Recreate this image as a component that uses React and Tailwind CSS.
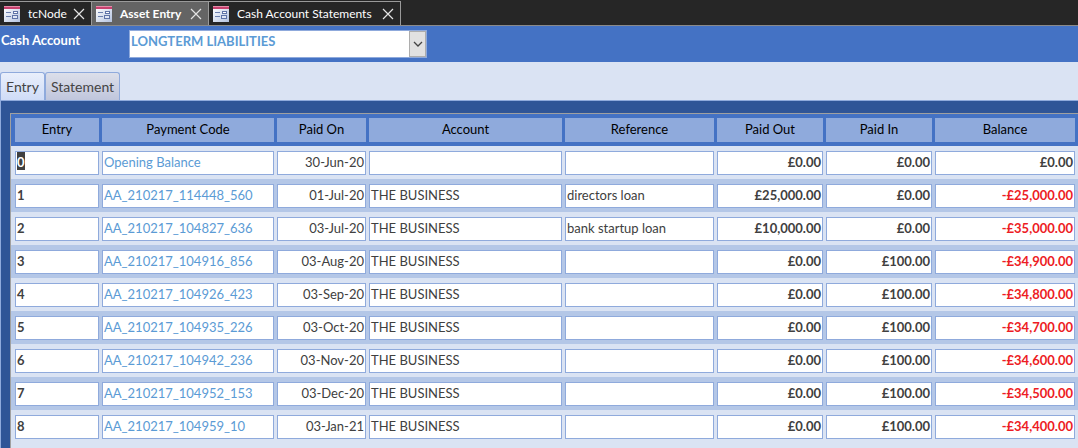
import { useState } from "react";

const documents = [
  { title: "tcNode", width: "w-[92px]" },
  { title: "Asset Entry", width: "w-[117px]", active: true },
  { title: "Cash Account Statements", width: "w-[192px]" },
];

const columns = [
  { title: "Entry", width: "w-[88px]", cell: "font-bold" },
  { title: "Payment Code", width: "w-[175px]", cell: "text-[#5b9bd5]" },
  { title: "Paid On", width: "w-[92px]", cell: "text-right" },
  { title: "Account", width: "w-[196px]", cell: "" },
  { title: "Reference", width: "w-[152px]", cell: "" },
  { title: "Paid Out", width: "w-[109px]", cell: "text-right font-bold" },
  { title: "Paid In", width: "w-[109px]", cell: "text-right font-bold" },
  { title: "Balance", width: "w-[146px]", cell: "text-right font-bold" },
];

const rows = [
  ["0", "Opening Balance", "30-Jun-20", "", "", "£0.00", "£0.00", "£0.00"],
  ["1", "AA_210217_114448_560", "01-Jul-20", "THE BUSINESS", "directors loan", "£25,000.00", "£0.00", "-£25,000.00"],
  ["2", "AA_210217_104827_636", "03-Jul-20", "THE BUSINESS", "bank startup loan", "£10,000.00", "£0.00", "-£35,000.00"],
  ["3", "AA_210217_104916_856", "03-Aug-20", "THE BUSINESS", "", "£0.00", "£100.00", "-£34,900.00"],
  ["4", "AA_210217_104926_423", "03-Sep-20", "THE BUSINESS", "", "£0.00", "£100.00", "-£34,800.00"],
  ["5", "AA_210217_104935_226", "03-Oct-20", "THE BUSINESS", "", "£0.00", "£100.00", "-£34,700.00"],
  ["6", "AA_210217_104942_236", "03-Nov-20", "THE BUSINESS", "", "£0.00", "£100.00", "-£34,600.00"],
  ["7", "AA_210217_104952_153", "03-Dec-20", "THE BUSINESS", "", "£0.00", "£100.00", "-£34,500.00"],
  ["8", "AA_210217_104959_10", "03-Jan-21", "THE BUSINESS", "", "£0.00", "£100.00", "-£34,400.00"],
];

function FormIcon() {
  return (
    <svg className="h-4 w-4 shrink-0" viewBox="0 0 16 16" shapeRendering="crispEdges" aria-hidden="true">
      <defs>
        <linearGradient id="sheet" x1="0" y1="0" x2="1" y2="1">
          <stop offset="0" stopColor="#ffffff" />
          <stop offset="1" stopColor="#b4c3e0" />
        </linearGradient>
      </defs>
      <rect y="1" width="16" height="15" fill="url(#sheet)" />
      <rect width="16" height="3" fill="#c8416f" />
      <rect width="16" height="1" fill="#e48ba8" />
      <rect x="2" y="6" width="5" height="1" fill="#6b7fae" />
      <rect x="2" y="10" width="5" height="1" fill="#6b7fae" />
      <rect x="9.5" y="5.5" width="4" height="2" fill="#fff" stroke="#5f74a8" />
      <rect x="8.5" y="9.5" width="5" height="3" fill="#dfe6f5" stroke="#5f74a8" />
    </svg>
  );
}

function DocumentTab({ title, width, active }) {
  return (
    <div
      className={`flex h-6 items-center border-t border-r border-[#9a9a9a] pl-[2px] pr-[6px] text-white ${width} ${
        active ? "bg-[#646464] font-bold" : "bg-[#262626]"
      }`}
    >
      <button type="button" className="flex min-w-0 flex-1 items-center gap-2 whitespace-nowrap pl-[2px]">
        <FormIcon />
        {title}
      </button>
      <button type="button" aria-label={`Close ${title}`} className="shrink-0">
        <svg className="h-3 w-3" viewBox="0 0 12 12" stroke="#e4e4e4" strokeWidth="1.2" fill="none">
          <path d="M1 1 11 11M11 1 1 11" />
        </svg>
      </button>
    </div>
  );
}

function PageTab({ title, active, onClick }) {
  return (
    <button
      type="button"
      role="tab"
      aria-selected={active}
      onClick={onClick}
      className={`h-7 rounded-t-[3px] border border-b-0 border-[#8faadc] px-[5px] text-sm text-[#444] ${
        active ? "bg-linear-to-b from-[#e9effb] to-[#cfdcf7]" : "bg-linear-to-b from-[#dcdfea] to-[#c0c6dc]"
      }`}
    >
      {title}
    </button>
  );
}

export default function App() {
  const [page, setPage] = useState("Entry");

  return (
    <div className="flex min-h-screen flex-col bg-[#dae3f3] font-[Lato,'Liberation_Sans',sans-serif] text-[13px] text-[#404040]">
      <nav aria-label="Open documents" className="flex border-b border-[#8a8a8a] bg-[#262626] pt-px text-xs">
        {documents.map((doc) => (
          <DocumentTab key={doc.title} {...doc} />
        ))}
      </nav>

      <header className="flex h-9 items-start bg-[#4472c4] pt-1">
        <label htmlFor="cash-account" className="w-[129px] shrink-0 pl-px leading-5 font-bold text-white">
          Cash Account
        </label>
        <div className="flex h-7 w-[298px] border border-[#8faadc] bg-white">
          <select
            id="cash-account"
            className="h-5 min-w-0 flex-1 appearance-none bg-white pl-px leading-5 font-bold text-[#5b9bd5] outline-none"
          >
            <option>LONGTERM LIABILITIES</option>
          </select>
          <label
            htmlFor="cash-account"
            aria-label="Open list"
            className="flex w-[17px] items-center justify-center border border-[#adadad] bg-[#e1e1e1]"
          >
            <svg className="h-2 w-[10px]" viewBox="0 0 10 8" fill="none" stroke="#444" strokeWidth="1.3">
              <path d="M1 2 5 6 9 2" />
            </svg>
          </label>
        </div>
      </header>

      <div role="tablist" className="flex border-b border-[#8faadc] pt-[10px]">
        {["Entry", "Statement"].map((title) => (
          <PageTab key={title} title={title} active={page === title} onClick={() => setPage(title)} />
        ))}
      </div>

      <main className="flex flex-1 flex-col border-l border-[#8faadc] bg-[#2f5597] pt-3 pl-[9px]">
        <div className="flex-1 border-t border-l border-[#a0a0a0] bg-[#dae3f3]">
          <table className="w-full table-fixed border-collapse">
            <thead>
              <tr className="bg-[#4472c4]">
                {columns.map((column) => (
                  <th
                    key={column.title}
                    scope="col"
                    className={`h-8 p-0 pl-[3px] font-normal text-black first:pl-1 last:pr-[3px] ${column.width}`}
                  >
                    <div className="h-6 bg-[#8faadc] leading-[22px]">{column.title}</div>
                  </th>
                ))}
              </tr>
            </thead>
            <tbody>
              {rows.map((row) => (
                <tr key={row[0]} className="even:bg-[#b4c7e7]">
                  {row.map((value, i) => (
                    <td key={columns[i].title} className="h-[33px] p-0 pl-[3px] first:pl-1 last:pr-[3px]">
                      <div
                        className={`h-6 overflow-hidden border border-[#8faadc] bg-white px-px leading-5 whitespace-nowrap ${columns[i].cell} ${
                          value.startsWith("-£") ? "text-[#ed1c24]" : ""
                        }`}
                      >
                        {i === 0 && value === "0" ? (
                          <mark className="inline-block h-[18px] bg-[#404040] leading-5 text-white">{value}</mark>
                        ) : (
                          value
                        )}
                      </div>
                    </td>
                  ))}
                </tr>
              ))}
            </tbody>
          </table>
        </div>
      </main>
    </div>
  );
}
